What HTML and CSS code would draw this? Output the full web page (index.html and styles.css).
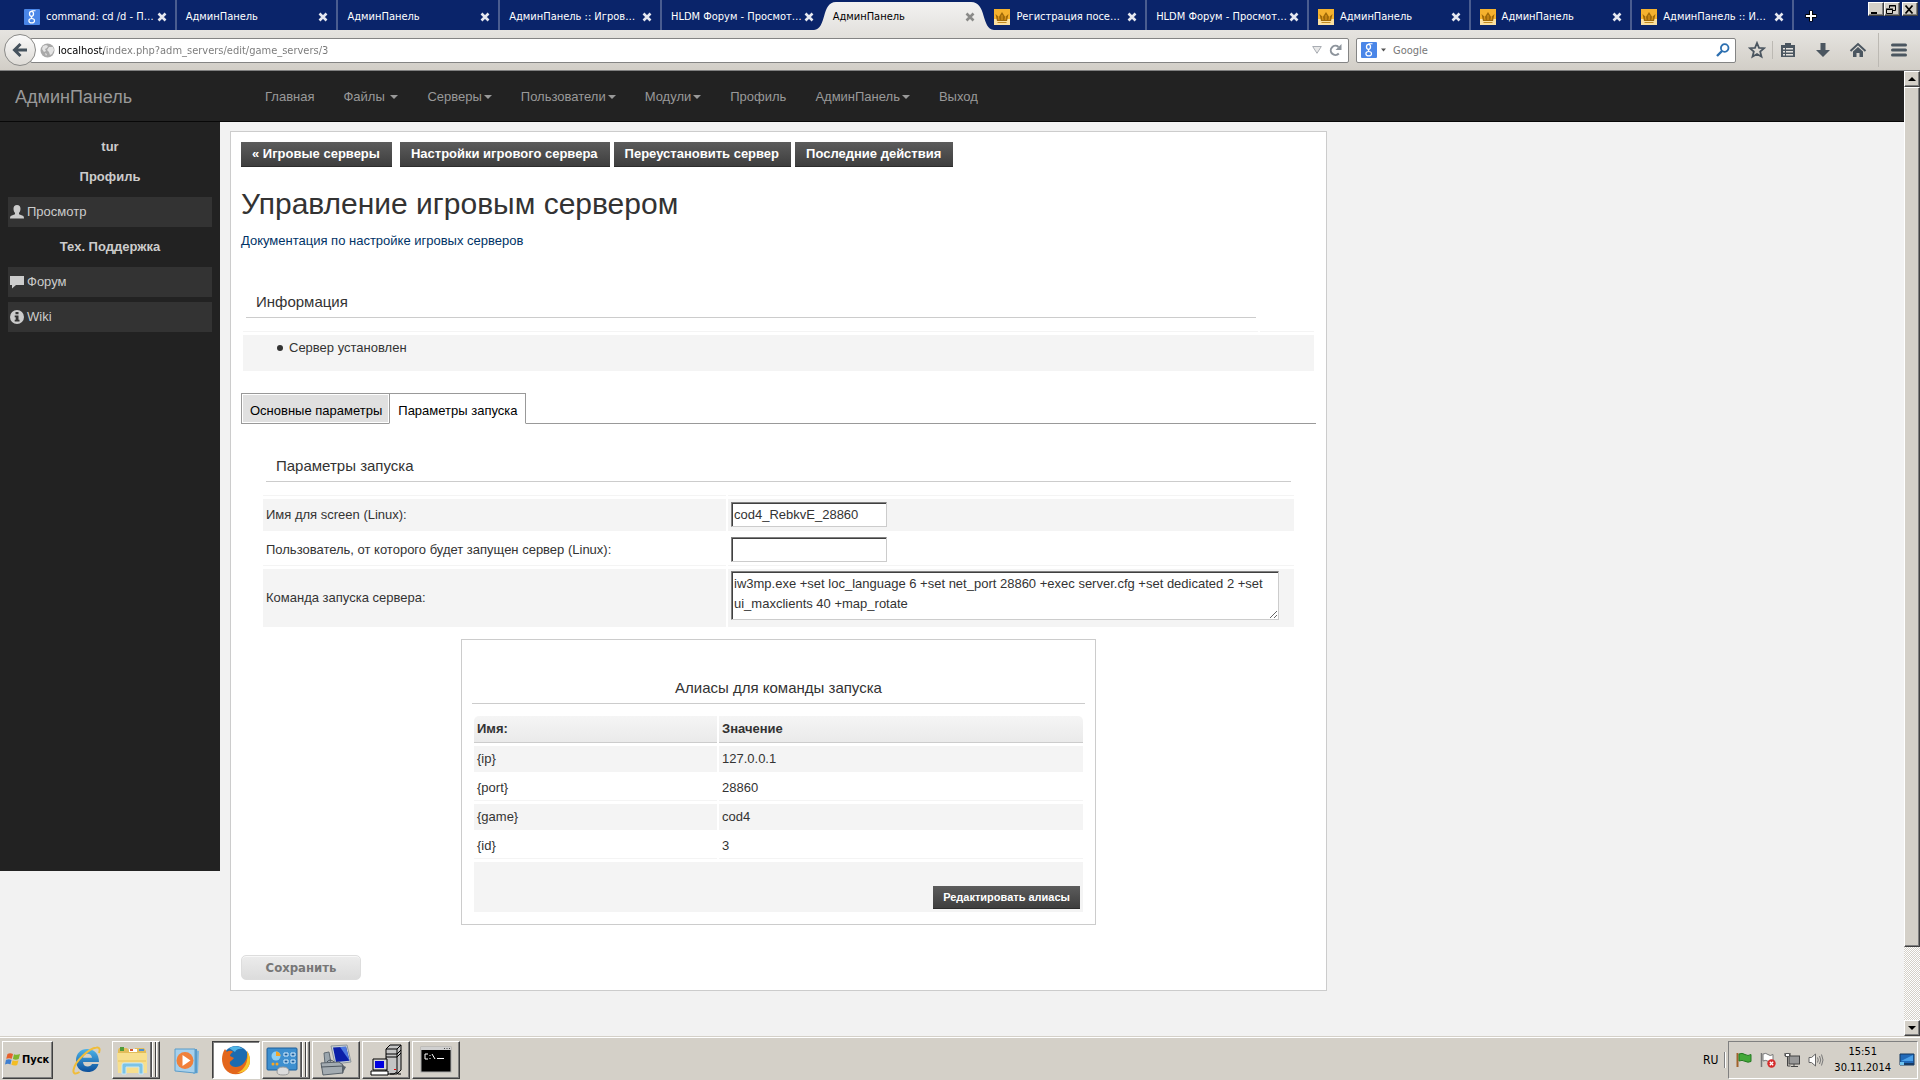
FILE: index.html
```html
<!DOCTYPE html>
<html lang="ru">
<head>
  <meta charset="UTF-8">
  <title>АдминПанель</title>
  <link rel="stylesheet" href="styles.css">
</head>
<body>
  <!-- Shared icons -->
  <svg class="sprite" width="0" height="0" aria-hidden="true">
    <symbol id="i-close" viewBox="0 0 10 10">
      <path d="M1.5 1.5l7 7M8.5 1.5l-7 7" stroke="currentColor" stroke-width="2.6" fill="none"/>
    </symbol>
    <symbol id="i-crown" viewBox="0 0 16 16">
      <rect width="16" height="16" fill="#f5b22e"/>
      <rect y="10" width="16" height="6" fill="#fbe0a0"/>
      <path d="M3 12L1.5 5l3.300 3L8 3l3.200 5L14.500 5 13 12z" fill="#a06a08"/>
      <path d="M3.500 13h9v1h-9z" fill="#c08a20"/>
      <path d="M5 11l-.5-3M8 11V6M11 11l.5-3" stroke="#e39a1c" stroke-width="1"/>
    </symbol>
    <symbol id="i-google" viewBox="0 0 16 16">
      <rect width="16" height="16" rx="1" fill="#4a86e8"/>
      <ellipse cx="7.500" cy="4.800" rx="2" ry="2.500" fill="none" stroke="#fff" stroke-width="1.300"/>
      <path d="M7.500 1.800h4M8 7.300q-1.500 1 .3 1.900" fill="none" stroke="#fff" stroke-width="1.100"/>
      <ellipse cx="7.700" cy="11.700" rx="2.800" ry="2.200" fill="none" stroke="#fff" stroke-width="1.200"/>
    </symbol>
  </svg>

  <!-- Tab strip -->
  <div class="tab-strip">
    <div class="tabs">
      <div class="tab"><svg class="favicon"><use href="#i-google"/></svg><span class="tab-title">command: cd /d - П…</span><button class="tab-close" aria-label="Закрыть"><svg><use href="#i-close"/></svg></button></div>
      <div class="tab"><span class="tab-title">АдминПанель</span><button class="tab-close" aria-label="Закрыть"><svg><use href="#i-close"/></svg></button></div>
      <div class="tab"><span class="tab-title">АдминПанель</span><button class="tab-close" aria-label="Закрыть"><svg><use href="#i-close"/></svg></button></div>
      <div class="tab"><span class="tab-title">АдминПанель :: Игров…</span><button class="tab-close" aria-label="Закрыть"><svg><use href="#i-close"/></svg></button></div>
      <div class="tab before-active"><span class="tab-title">HLDM Форум - Просмот…</span><button class="tab-close" aria-label="Закрыть"><svg><use href="#i-close"/></svg></button></div>
      <div class="tab active">
        <svg class="tab-shape" viewBox="0 0 180 28" preserveAspectRatio="none"><defs><linearGradient id="tab-fill" x2="0" y2="1"><stop offset="0" stop-color="#f3f2f1"/><stop offset="1" stop-color="#e5e3e0"/></linearGradient></defs><path d="M0 28C13 27 7 0 22 0H157C173 0 167 27 180 28z" fill="url(#tab-fill)"/></svg>
        <span class="tab-title">АдминПанель</span><button class="tab-close" aria-label="Закрыть"><svg><use href="#i-close"/></svg></button>
      </div>
      <div class="tab"><svg class="favicon"><use href="#i-crown"/></svg><span class="tab-title">Регистрация посе…</span><button class="tab-close" aria-label="Закрыть"><svg><use href="#i-close"/></svg></button></div>
      <div class="tab"><span class="tab-title">HLDM Форум - Просмот…</span><button class="tab-close" aria-label="Закрыть"><svg><use href="#i-close"/></svg></button></div>
      <div class="tab"><svg class="favicon"><use href="#i-crown"/></svg><span class="tab-title">АдминПанель</span><button class="tab-close" aria-label="Закрыть"><svg><use href="#i-close"/></svg></button></div>
      <div class="tab"><svg class="favicon"><use href="#i-crown"/></svg><span class="tab-title">АдминПанель</span><button class="tab-close" aria-label="Закрыть"><svg><use href="#i-close"/></svg></button></div>
      <div class="tab"><svg class="favicon"><use href="#i-crown"/></svg><span class="tab-title">АдминПанель :: И…</span><button class="tab-close" aria-label="Закрыть"><svg><use href="#i-close"/></svg></button></div>
    </div>
    <button class="new-tab" aria-label="Новая вкладка"><svg width="14" height="14" viewBox="0 0 14 14"><path d="M7 1.500v11M1.500 7h11" stroke="#000" stroke-width="4"/><path d="M7 2v10M2 7h10" stroke="#fff" stroke-width="2"/></svg></button>
    <div class="window-buttons">
      <button class="raised" aria-label="Свернуть"><svg width="12" height="11" viewBox="0 0 12 11"><path d="M2 9h6" stroke="#000" stroke-width="2"/></svg></button>
      <button class="raised" aria-label="Восстановить"><svg width="12" height="11" viewBox="0 0 12 11"><path d="M4.500 4V1.500h6v5H8M4 2h7M1.500 5.500h6v4h-6zM1 5h7" stroke="#000" fill="none"/></svg></button>
      <button class="raised" aria-label="Закрыть окно"><svg width="12" height="11" viewBox="0 0 12 11"><path d="M2.500 1.500l7 8M9.500 1.500l-7 8" stroke="#000" stroke-width="1.800"/></svg></button>
    </div>
  </div>

  <!-- Address bar -->
  <div class="toolbar">
    <button class="back" aria-label="Назад"><svg width="16" height="16" viewBox="0 0 16 16"><path d="M8.500 2L2.500 8l6 6M3 8h12" stroke="#45525d" stroke-width="3" fill="none"/></svg></button>
    <div class="url-box">
      <svg width="15" height="15" viewBox="0 0 15 15"><circle cx="7.500" cy="7.500" r="7" fill="#a9a9a9"/><path d="M3 3l3-1 2 1-1 2-2 1 1 2-2 1-2-3zM9 4l4 0 1 3-2 4-2 1-1-3-2-2zM5 10l2 1-1 2z" fill="#e4e4e4"/></svg>
      <input class="url" type="text" aria-label="Адрес" value="localhost/index.php?adm_servers/edit/game_servers/3">
      <svg class="drop" width="10" height="8" viewBox="0 0 10 8"><path d="M.7.500h8.600L5 7.300z" fill="#e8e8e8" stroke="#a9adb3"/></svg>
      <button class="plain" aria-label="Обновить"><svg width="13" height="13" viewBox="0 0 13 13"><path d="M9.800 9.500A4.600 4.600 0 1 1 9.500 3" fill="none" stroke="#8d949c" stroke-width="2"/><path d="M12.500 0v6H6.500z" fill="#8d949c"/></svg></button>
    </div>
    <div class="search-box">
      <svg class="favicon"><use href="#i-google"/></svg>
      <svg width="5" height="4" viewBox="0 0 5 4"><path d="M0 .500h5L2.500 3.500z" fill="#555"/></svg>
      <input class="search" type="text" aria-label="Поиск" placeholder="Google">
      <button class="plain" aria-label="Найти"><svg width="14" height="14" viewBox="0 0 14 14"><circle cx="8.700" cy="5" r="3.800" fill="none" stroke="#2c6fb0" stroke-width="1.800"/><path d="M6 8l-5 5" stroke="#2c6fb0" stroke-width="2.400"/></svg></button>
    </div>
    <div class="tools">
      <button class="plain" aria-label="Закладка"><svg width="18" height="18" viewBox="0 0 18 18"><path d="M9 2l2 4.800 5.200.4-4 3.400 1.300 5.100L9 13l-4.500 2.700 1.300-5.100-4-3.400L7 6.800z" fill="none" stroke="#4b5660" stroke-width="1.800"/></svg></button>
      <i class="tool-sep short"></i>
      <button class="plain" aria-label="Список закладок"><svg width="18" height="18" viewBox="0 0 18 18"><path d="M2 4h4V2h6v2h4v12H2z" fill="#4b5660"/><path d="M4 7h2v1.500H4zM7 7h7v1.500H7zM4 10h2v1.500H4zM7 10h7v1.500H7zM4 13h2v1.500H4zM7 13h7v1.500H7z" fill="#e5e2dd"/></svg></button>
      <button class="plain" aria-label="Загрузки"><svg width="18" height="18" viewBox="0 0 18 18"><path d="M6.500 2h5v7h4.500L9 16 2 9h4.500z" fill="#4b5660"/></svg></button>
      <button class="plain" aria-label="Домой"><svg width="18" height="18" viewBox="0 0 18 18"><path d="M1.500 10L9 3l7.500 7" fill="none" stroke="#4b5660" stroke-width="2"/><path d="M4 10.500L9 6l5 4.500V16h-3.500v-4h-3v4H4z" fill="#4b5660"/></svg></button>
      <i class="tool-sep"></i>
      <button class="plain" aria-label="Меню"><svg width="18" height="18" viewBox="0 0 18 18"><path d="M2.500 4h13M2.500 9h13M2.500 14h13" stroke="#4b5660" stroke-width="3" stroke-linecap="round"/></svg></button>
    </div>
  </div>

  <!-- Page -->
  <div class="viewport">
    <div class="page">
      <header class="navbar">
        <a class="brand" href="#">АдминПанель</a>
        <nav>
          <a href="#">Главная</a>
          <a href="#">Файлы <b class="caret"></b></a>
          <a href="#">Серверы<b class="caret"></b></a>
          <a href="#">Пользователи<b class="caret"></b></a>
          <a href="#">Модули<b class="caret"></b></a>
          <a href="#">Профиль</a>
          <a href="#">АдминПанель<b class="caret"></b></a>
          <a href="#">Выход</a>
        </nav>
      </header>

      <div class="columns">
        <aside class="sidebar">
          <h4>tur</h4>
          <h4>Профиль</h4>
          <a href="#"><svg width="14" height="14" viewBox="0 0 14 14"><path d="M7 0c2.300 0 3.500 1.500 3.500 3.700 0 2-.7 3.300-1.500 4.100v1.500l3.800 1.500c.8.300 1.200 1.200 1.200 2.700H0c0-1.500.4-2.400 1.200-2.700L5 9.300V7.800C4.200 7 3.500 5.700 3.500 3.700 3.500 1.500 4.700 0 7 0z" fill="#ccc"/></svg>Просмотр</a>
          <h4>Тех. Поддержка</h4>
          <a href="#"><svg width="14" height="14" viewBox="0 0 14 14"><path d="M0 1h14v9H6l-4 3.500V10H0z" fill="#ccc"/></svg>Форум</a>
          <a href="#"><svg width="14" height="14" viewBox="0 0 14 14"><circle cx="7" cy="7" r="7" fill="#ccc"/><path d="M5.500 2h3v2.200h-3zM4.700 5.500h3.800v4.300h1v1.700H4.700V9.800h1V7.200h-1z" fill="#333"/></svg>Wiki</a>
        </aside>

        <main class="content">
          <div class="actions">
            <a class="btn first" href="#">« Игровые серверы</a>
            <a class="btn" href="#">Настройки игрового сервера</a>
            <a class="btn" href="#">Переустановить сервер</a>
            <a class="btn" href="#">Последние действия</a>
          </div>

          <h1>Управление игровым сервером</h1>
          <a class="doc-link" href="#">Документация по настройке игровых серверов</a>

          <section class="info">
            <h3>Информация</h3>
            <table class="grid">
              <thead><tr><th></th><th class="narrow"></th></tr></thead>
              <tbody><tr class="odd"><td colspan="2"><ul><li>Сервер установлен</li></ul></td></tr></tbody>
            </table>
          </section>

          <div class="panel-tabs">
            <button>Основные параметры</button>
            <button class="current">Параметры запуска</button>
          </div>

          <form class="panel">
            <h3>Параметры запуска</h3>
            <table class="grid form-grid">
              <thead><tr><th class="label-col"></th><th></th></tr></thead>
              <tbody>
                <tr class="odd">
                  <td><label for="screen">Имя для screen (Linux):</label></td>
                  <td><input id="screen" type="text" value="cod4_RebkvE_28860"></td>
                </tr>
                <tr>
                  <td><label for="user">Пользователь, от которого будет запущен сервер (Linux):</label></td>
                  <td><input id="user" type="text"></td>
                </tr>
                <tr class="odd">
                  <td><label for="command">Команда запуска сервера:</label></td>
                  <td class="area-cell"><textarea id="command" rows="2">iw3mp.exe +set loc_language 6 +set net_port 28860 +exec server.cfg +set dedicated 2 +set ui_maxclients 40 +map_rotate</textarea></td>
                </tr>
              </tbody>
            </table>

            <section class="aliases">
              <h3>Алиасы для команды запуска</h3>
              <table class="grid alias-grid">
                <thead><tr><th class="name-col">Имя:</th><th>Значение</th></tr></thead>
                <tbody>
                  <tr class="odd"><td>{ip}</td><td>127.0.0.1</td></tr>
                  <tr><td>{port}</td><td>28860</td></tr>
                  <tr class="odd"><td>{game}</td><td>cod4</td></tr>
                  <tr><td>{id}</td><td>3</td></tr>
                  <tr class="odd"><td class="edit-cell" colspan="2"><a class="btn small" href="#">Редактировать алиасы</a></td></tr>
                </tbody>
              </table>
            </section>
          </form>

          <button class="save">Сохранить</button>
        </main>
      </div>
    </div>

    <div class="scrollbar">
      <button class="raised" aria-label="Вверх"><svg width="8" height="4" viewBox="0 0 8 4"><path d="M4 0l4 4H0z"/></svg></button>
      <div class="thumb raised"></div>
      <button class="raised" aria-label="Вниз"><svg width="8" height="4" viewBox="0 0 8 4"><path d="M4 4L0 0h8z"/></svg></button>
    </div>
  </div>

  <!-- Taskbar -->
  <footer class="taskbar">
    <button class="start raised">
      <svg width="16" height="15" viewBox="0 0 16 15"><path d="M2.500 2Q5 .500 8 2L6.800 6.800Q4 5.500 1.200 6.800z" fill="#e6602c"/><path d="M9 2.300q3 1.200 6-.3l-1.300 5q-3 1.300-5.800 0z" fill="#7fb52b"/><path d="M1 7.800q2.800-1.300 5.600 0L5.400 12.500Q3 11.200 0 12.500z" fill="#3f7fd0"/><path d="M7.600 8.200q3 1.300 5.900 0l-1.300 4.800q-3 1.200-5.800-.200z" fill="#f3bd24"/></svg>Пуск
    </button>
    <div class="tasks">
      <button class="task" aria-label="Internet Explorer"><svg width="32" height="32" viewBox="0 0 32 32"><defs><linearGradient id="ie" x2="0" y2="1"><stop offset="0" stop-color="#4db4ea"/><stop offset="1" stop-color="#0c4f9a"/></linearGradient></defs><path d="M16 5c7.500 0 12 5 12 13H12c.3 3 2 4.500 4.800 4.500 2 0 3.500-1 4.200-2.500h6.500C26 25.500 22 28 16.800 28 9.500 28 5 23.500 5 16.500S9.500 5 16 5zm-4 8.800h9c-.3-2.500-2-4-4.500-4s-4.200 1.500-4.500 4z" fill="url(#ie)"/><path d="M28 9c1.500-4 .5-6-2.500-5.500C18 4.500 4 17 2.500 26c-.6 4 2 4.500 6 2" fill="none" stroke="#f0bd3a" stroke-width="2"/></svg></button>
      <button class="task raised stacked" aria-label="Проводник"><svg width="32" height="32" viewBox="0 0 32 32"><path d="M3 4h8l2 2h6V4h9l2 3v22H2V6z" fill="#e2bd5a"/><path d="M4 3h4v4H4z" fill="#4f9b3a"/><path d="M13 5h8v3h-8z" fill="#fff"/><path d="M14 5h3v2h-3z" fill="#d6562b"/><path d="M23 5h5v2h-5z" fill="#4d8fd4"/><path d="M1 9h30v20H2z" fill="#f7df8e"/><path d="M2 16h28v2H2z" fill="#f1d072"/><path d="M6 30V21q0-2 2-2h17q2 0 2 2v9h-4v-7H10v7z" fill="#7cc3e6" stroke="#c8e8f7"/></svg></button>
      <button class="task" aria-label="Проигрыватель"><svg width="32" height="32" viewBox="0 0 32 32"><path d="M23 6l5 1-1 22-5 1z" fill="#7eb6dd"/><path d="M4 5h20v24L4 27z" fill="#a6d0ec" stroke="#5b9cc9"/><path d="M24 5h2v24h-2z" fill="#5b9cc9"/><circle cx="14" cy="16.500" r="8.500" fill="#f0803a"/><path d="M11.500 11v11l8-5.500z" fill="#fff"/></svg></button>
      <button class="task pressed" aria-label="Firefox"><svg width="32" height="32" viewBox="0 0 32 32"><circle cx="16" cy="15" r="13" fill="#1c6bb0"/><path d="M9 4q8-4 14 1-6-1-8 3z" fill="#4fb5e6"/><path d="M27 7c4 6 4 13 0 18-6 7-17 7-22 0C1 19 1 11 5 5l2 3c2-2 5-1 6 0-2 1-3 3-3 4l4 2c-2 3-5 3-4 6 2 4 9 4 13 0 4-4 5-9 4-13z" fill="#e3661c"/><path d="M27 7c4 6 4 13 0 18-3 3-7 4-10 4 8-3 12-12 10-22z" fill="#f8c62c"/></svg></button>
      <button class="task raised stacked" aria-label="Панель управления"><svg width="32" height="32" viewBox="0 0 32 32"><rect x="1" y="4" width="30" height="22" rx="1" fill="#3d8fcf" stroke="#1f5f9a"/><circle cx="10" cy="12" r="4.500" fill="#8fd0f3"/><path d="M10 12V7.500A4.500 4.500 0 0 1 14.500 12z" fill="#f7a623"/><path d="M18 9h4v3h-4zM25 9h4v3h-4zM18 16h4v3h-4zM25 16h4v3h-4z" fill="#1c5f9e" stroke="#d7efff"/><circle cx="7" cy="20" r="1.500" fill="#f7a623"/><circle cx="11" cy="20" r="1.500" fill="#f7a623"/><path d="M11 28q0-5 6-5t6 5q0 3-6 3t-6-3z" fill="#dcdcdc" stroke="#9a9a9a"/></svg></button>
      <button class="task raised" aria-label="Диспетчер сервера"><svg width="32" height="32" viewBox="0 0 32 32"><path d="M11 2l16-1 4 17-16 2z" fill="#c9d2d8" stroke="#8b959c"/><path d="M13 3.500l13-.8 3.500 14L16 18z" fill="#0b1fa8"/><path d="M20 3l6-.3 3.500 14z" fill="#4d79e0"/><path d="M4 9l5-1 2 11-6 1z" fill="#9aa5ad" stroke="#616b73"/><path d="M1 19l18-1 4 3v8L3 31z" fill="#a3abb1" stroke="#59626a"/><path d="M1 23l22-1M7 18q3-4 7 0" stroke="#4d565e" fill="none"/><path d="M22 21l4 2-4 7z" fill="#59626a"/></svg></button>
      <button class="task raised" aria-label="Сервер"><svg width="32" height="32" viewBox="0 0 32 32"><path d="M16 5l4-4h11v25l-4 4H16z" fill="#c4c4c4" stroke="#000"/><path d="M16 5h11v24M27 5l4-4M16 10h11l4-4M16 13h11l4-4" fill="none" stroke="#000"/><path d="M3 15h14v11H3z" fill="#d8d8d8" stroke="#000"/><path d="M5 17h9v7H5z" fill="#0000e0"/><path d="M1 27h17v4H1z" fill="#fff" stroke="#000"/><path d="M20 30h4q2-3 4 0h3" fill="none" stroke="#000"/><path d="M24 25h2v1h-2z" fill="#e00"/></svg></button>
      <button class="task raised" aria-label="Командная строка"><svg width="32" height="32" viewBox="0 0 32 32"><rect x="1" y="3" width="30" height="25" fill="#000" stroke="#a9a9a9"/><path d="M1 3h30v3H1z" fill="#d0d0d0"/><path d="M24 4.500h1M26.500 4.500h1M29 4.500h1" stroke="#444"/><path d="M8 10H5v5h3M10 11v1M10 14v1M12 10l3 5M17 14.500h7" stroke="#fff" fill="none"/></svg></button>
    </div>
    <span class="lang">RU</span>
    <div class="tray">
      <svg width="16" height="16" viewBox="0 0 16 16"><path d="M1.500 1v14" stroke="#a0622c" stroke-width="2"/><path d="M3 2q3-1.500 6 .5t6 0v7q-3 1.500-6-.2T3 9z" fill="#43a838" stroke="#257a22"/></svg>
      <svg width="16" height="16" viewBox="0 0 16 16"><path d="M1.500 1v14" stroke="#777" stroke-width="1.500"/><path d="M3 2q3-1.500 5 .5t5 0v7q-3 1.500-5-.2T3 9z" fill="#fff" stroke="#777"/><circle cx="11.500" cy="11.500" r="4.200" fill="#d42a2a"/><path d="M9.800 9.800l3.400 3.400M13.200 9.800l-3.400 3.400" stroke="#fff" stroke-width="1.300"/></svg>
      <svg width="16" height="16" viewBox="0 0 16 16"><rect x="5" y="4" width="10.500" height="8" fill="#999" stroke="#444"/><path d="M7 14.500h7M10 12v2M1 1v3h5V1M3.500 4v10h3" stroke="#444" fill="none"/><path d="M1.500 1.500h4v3h-4z" fill="#fff" stroke="#555"/></svg>
      <svg width="16" height="16" viewBox="0 0 16 16"><path d="M1 5.500h2.500L7.500 2v12L3.500 10.500H1z" fill="#fff" stroke="#666"/><path d="M9.500 5.500q1.500 2.500 0 5M11.500 4q2.500 4 0 8M13.500 2.500q3 5.500 0 11" stroke="#777" fill="none"/></svg>
      <div class="clock"><span>15:51</span><span>30.11.2014</span></div>
      <svg width="16" height="14" viewBox="0 0 16 14"><path d="M1 1h14v11H1z" fill="#2169b8" stroke="#12365f"/><path d="M2 8L14 2v6z" fill="#4ba0e8"/><path d="M1 10h14v2H1z" fill="#173c66"/><path d="M1 9h4v3H1z" fill="#6fc3ef"/></svg>
    </div>
  </footer>
</body>
</html>
```
FILE: styles.css
```css
:root {
  --ui-font: "DejaVu Sans Condensed", "DejaVu Sans", sans-serif;
  --page-font: "Liberation Sans", Arial, sans-serif;
  --face: #d4d0c8;
  --navy: #0a246a;
  --line: #ccc;
  --row: #f4f4f4;
}

* {
  box-sizing: border-box;
}

body {
  margin: 0;
  height: 100vh;
  display: flex;
  flex-direction: column;
  overflow: hidden;
  font: 13px/20px var(--page-font);
  color: #333;
  background: #f2f2f2;
}

button,
input,
textarea {
  font: inherit;
  color: inherit;
  margin: 0;
}

a {
  text-decoration: none;
}

svg {
  display: block;
  flex: none;
}

.sprite {
  position: absolute;
}

/* Classic beveled surface */
.raised {
  background: var(--face);
  border: 1px solid;
  border-color: #fff #404040 #404040 #fff;
  box-shadow: inset -1px -1px #808080;
  padding: 0;
}

.plain {
  background: none;
  border: 0;
  padding: 0;
}

/* Tab strip */
.tab-strip {
  flex: none;
  display: flex;
  height: 30px;
  padding-left: 15px;
  background: var(--navy);
  font: 11px/16px var(--ui-font);
  color: #fff;
}

.tabs {
  flex: 1;
  display: flex;
}

.tab {
  position: relative;
  flex: 1 1 0;
  min-width: 0;
  display: flex;
  align-items: center;
  gap: 6px;
  padding: 3px 8px 0 9px;
  border-right: 2px solid #4a5d90;
}

.tab.before-active,
.tab.active {
  border-right-color: transparent;
}

.tab.active {
  color: #000;
}

.tab-shape {
  position: absolute;
  left: -10px;
  top: 2px;
  width: 180px;
  height: 28px;
}

.tab-title {
  position: relative;
  flex: 1;
  min-width: 0;
  white-space: nowrap;
}

.tab-close {
  position: relative;
  padding: 0;
  border: 0;
  background: none;
  color: #e6e8f0;
}

.active .tab-close {
  color: #8a8a88;
}

.tab-close svg {
  width: 10px;
  height: 10px;
}

.favicon {
  width: 16px;
  height: 16px;
}

.new-tab {
  width: 34px;
  padding: 2px 0 0 10px;
  border: 0;
  background: none;
}

.window-buttons {
  display: flex;
  width: 92px;
  justify-content: flex-end;
  padding: 2px 2px 0 0;
}

.window-buttons button {
  width: 16px;
  height: 14px;
}

.window-buttons button:last-child {
  margin-left: 2px;
}

/* Address bar */
.toolbar {
  flex: none;
  display: flex;
  align-items: center;
  height: 41px;
  padding: 0 12px 0 4px;
  background: linear-gradient(#e6e4e0, #d2cec7);
  border-bottom: 1px solid #808080;
  font: 11px/16px var(--ui-font);
}

.back {
  position: relative;
  display: flex;
  align-items: center;
  justify-content: center;
  width: 32px;
  height: 32px;
  padding: 0;
  border: 1px solid #8a8a88;
  border-radius: 50%;
  background: linear-gradient(#fafafa, #dedbd6);
}

.url-box,
.search-box {
  display: flex;
  align-items: center;
  height: 25px;
  background: #fff;
  border: 1px solid #848484;
  border-radius: 2px;
}

.url-box {
  flex: 1;
  margin-left: -6px;
  padding: 0 6px 0 9px;
  gap: 3px;
}

.drop {
  margin-right: 4px;
}

.url,
.search {
  flex: 1;
  min-width: 0;
  border: 0;
  outline: 0;
  padding: 2px 0 0;
  background: none;
}

/* Host part is darker than the path */
.url {
  color: transparent;
  background: linear-gradient(90deg, #000 46px, #777 46px);
  -webkit-background-clip: text;
  background-clip: text;
}

.search-box {
  width: 380px;
  margin-left: 7px;
  padding: 0 5px 0 4px;
  gap: 4px;
}

.search {
  margin-left: 3px;
}

.search::placeholder {
  color: #777;
  opacity: 1;
}

.tools {
  display: flex;
  align-items: center;
  gap: 17px;
  margin-left: 12px;
}

.tool-sep {
  width: 1px;
  height: 34px;
  margin: 0 -6px;
  background: #bcb9b3;
}

.tool-sep.short {
  height: 18px;
  margin: 0 -11px;
}

/* Page area */
.viewport {
  flex: 1;
  min-height: 0;
  display: flex;
}

.page {
  flex: 1;
  min-width: 0;
}

.navbar {
  display: flex;
  align-items: center;
  height: 51px;
  padding-top: 1px;
  background: #222;
  border-bottom: 1px solid #080808;
}

.navbar a {
  color: #999;
}

.brand {
  width: 250px;
  padding-left: 15px;
  font-size: 18px;
}

.navbar nav {
  display: flex;
}

.navbar nav a {
  padding: 0 14px 0 15px;
  white-space: pre;
}

.caret {
  display: inline-block;
  margin-left: 2px;
  vertical-align: middle;
  border-top: 4px solid;
  border-left: 4px solid transparent;
  border-right: 4px solid transparent;
}

.columns {
  display: flex;
  align-items: flex-start;
}

/* Sidebar */
.sidebar {
  width: 220px;
  min-height: 749px;
  padding: 15px 8px;
  background: #222;
}

.sidebar h4 {
  margin: 0 0 10px;
  font-size: 13px;
  text-align: center;
  color: #ccc;
}

.sidebar a {
  display: flex;
  align-items: center;
  gap: 3px;
  height: 30px;
  margin-bottom: 5px;
  padding-left: 2px;
  background: #333;
  color: #ccc;
}

.sidebar a + h4 {
  margin-top: 10px;
}

/* Main content */
.content {
  flex: 1;
  max-width: 1097px;
  margin: 9px 10px;
  padding: 10px;
  background: #fff;
  border: 1px solid var(--line);
}

.actions {
  display: flex;
  gap: 4px;
}

.btn {
  padding: 0 12px 0 11px;
  background: linear-gradient(#5c5c5c, #3e3e3e);
  border-bottom: 1px solid #2c2c2c;
  color: #fff;
  font-weight: bold;
  line-height: 24px;
  white-space: nowrap;
}

.btn.first {
  margin-right: 4px;
}

.btn.small {
  display: inline-block;
  padding: 0 10px;
  font-size: 11px;
  line-height: 22px;
}

h1 {
  margin: 20px 0 11px;
  font-size: 30px;
  font-weight: normal;
  line-height: 33px;
}

.doc-link {
  display: block;
  color: #036;
}

h3 {
  margin: 0;
  padding: 0 10px;
  border-bottom: 1px solid var(--line);
  font-size: 15px;
  font-weight: normal;
  line-height: 30px;
}

.info {
  padding-top: 36px;
}

.info h3 {
  margin: 0 60px 10px 5px;
}

/* Tables */
.grid {
  width: 100%;
  border-collapse: separate;
  border-spacing: 2px 3px;
}

.grid th,
.grid td {
  padding: 3px;
  border-bottom: 1px solid var(--row);
  text-align: left;
}

.grid th:empty {
  padding: 0;
}

.grid td {
  height: 26px;
  padding-bottom: 2px;
}

.grid .odd td {
  background: var(--row);
}

.narrow {
  width: 54px;
}

.info td {
  height: 36px;
  vertical-align: top;
}

.info ul {
  margin: 0;
  padding-left: 31px;
  list-style: none;
}

.info li::before {
  content: "";
  display: inline-block;
  width: 6px;
  height: 6px;
  margin-right: 6px;
  vertical-align: 1px;
  border-radius: 50%;
  background: #333;
}

/* Panel tabs */
.panel-tabs {
  display: flex;
  margin-top: 19px;
  border-bottom: 1px solid #999;
}

.panel-tabs button {
  height: 31px;
  margin-bottom: -1px;
  padding: 4px 7px 0 8px;
  border: 1px solid #999;
  background: #e0e0e0;
  box-shadow: inset 0 0 0 1px #fff;
  color: #000;
}

.panel-tabs .current {
  margin-left: -1px;
  border-bottom-color: #fff;
  background: #fff;
}

.panel {
  padding: 27px 20px 0;
}

.panel h3 {
  margin: 0 5px 10px;
}

.label-col {
  width: 463px;
}

.form-grid td {
  height: 32px;
}

.form-grid input,
.form-grid textarea {
  display: block;
  border: 1px solid;
  border-color: #808080 #ccc #ccc #808080;
  box-shadow: inset 1px 1px #404040;
  background: #fff;
}

.form-grid input {
  width: 156px;
  height: 25px;
  margin-bottom: 1px;
  padding: 1px 2px;
}

.form-grid .area-cell {
  padding: 2px 15px 6px 3px;
}

.form-grid textarea {
  width: 100%;
  height: 49px;
  padding: 2px;
  overflow: hidden;
}

/* Aliases */
.aliases {
  width: 635px;
  margin: 9px auto 0;
  padding: 33px 10px 9px;
  border: 1px solid var(--line);
}

.aliases h3 {
  margin: 0 0 9px;
  text-align: center;
}

.aliases th {
  background: linear-gradient(#f5f5f5, #eaeaea);
  border-bottom-color: var(--line);
}

.aliases th:first-child {
  border-top-left-radius: 5px;
}

.aliases th:last-child {
  border-top-right-radius: 5px;
}

.name-col {
  width: 243px;
}

.aliases .edit-cell {
  height: 50px;
  text-align: right;
  vertical-align: bottom;
}

.save {
  width: 120px;
  height: 25px;
  margin-top: 30px;
  padding: 0;
  border: 1px solid #ddd;
  border-radius: 5px;
  background: linear-gradient(#ececec, #dcdcdc);
  box-shadow: inset 0 1px #f8f8f8;
  color: #777;
  font: bold 13px/20px var(--ui-font);
}

/* Scrollbar */
.scrollbar {
  flex: none;
  display: flex;
  flex-direction: column;
  width: 16px;
  background: repeating-conic-gradient(#fff 0 25%, var(--face) 0 50%) 0 0 / 2px 2px;
}

.scrollbar button {
  display: flex;
  align-items: center;
  justify-content: center;
  width: 16px;
  height: 16px;
}

.thumb {
  height: 860px;
  margin-bottom: auto;
}

/* Taskbar */
.taskbar {
  flex: none;
  display: flex;
  align-items: center;
  height: 44px;
  padding: 2px 2px 0;
  background: var(--face);
  border-top: 1px solid var(--face);
  box-shadow: inset 0 1px #fff;
  font: 12px/16px var(--ui-font);
  color: #000;
}

.start {
  display: flex;
  align-items: center;
  gap: 1px;
  width: 51px;
  height: 38px;
  padding-left: 2px;
  font-weight: bold;
  font-size: 11px;
}

.tasks {
  flex: 1;
  display: flex;
  gap: 2px;
  margin-left: 9px;
}

.task {
  display: flex;
  align-items: center;
  width: 48px;
  height: 38px;
  padding: 0 0 0 7px;
}

.task:not(.raised):not(.pressed) {
  padding-left: 9px;
  border: 0;
  background: none;
}

.task.pressed {
  border: 1px solid;
  border-color: #404040 #fff #fff #404040;
  box-shadow: inset 1px 1px #808080;
  background: #fff;
}

/* Grouped windows: two extra edges on the right */
.task.stacked {
  padding-left: 3px;
  background: linear-gradient(90deg, transparent 37px, #808080 37px, #404040 39px, #fff 39px, #fff 40px, var(--face) 40px, var(--face) 42px, #404040 42px, #404040 43px, #fff 43px, #fff 44px, transparent 44px), var(--face);
}

.lang {
  padding-right: 6px;
  border-right: 1px solid #808080;
  box-shadow: 1px 0 #fff;
}

.tray {
  display: flex;
  align-items: center;
  gap: 8px;
  height: 38px;
  margin-left: 3px;
  padding: 0 2px 0 7px;
  border: 1px solid;
  border-color: #808080 #fff #fff #808080;
}

.clock {
  display: flex;
  flex-direction: column;
  margin-left: 2px;
  text-align: center;
  font-size: 11px;
}
```
